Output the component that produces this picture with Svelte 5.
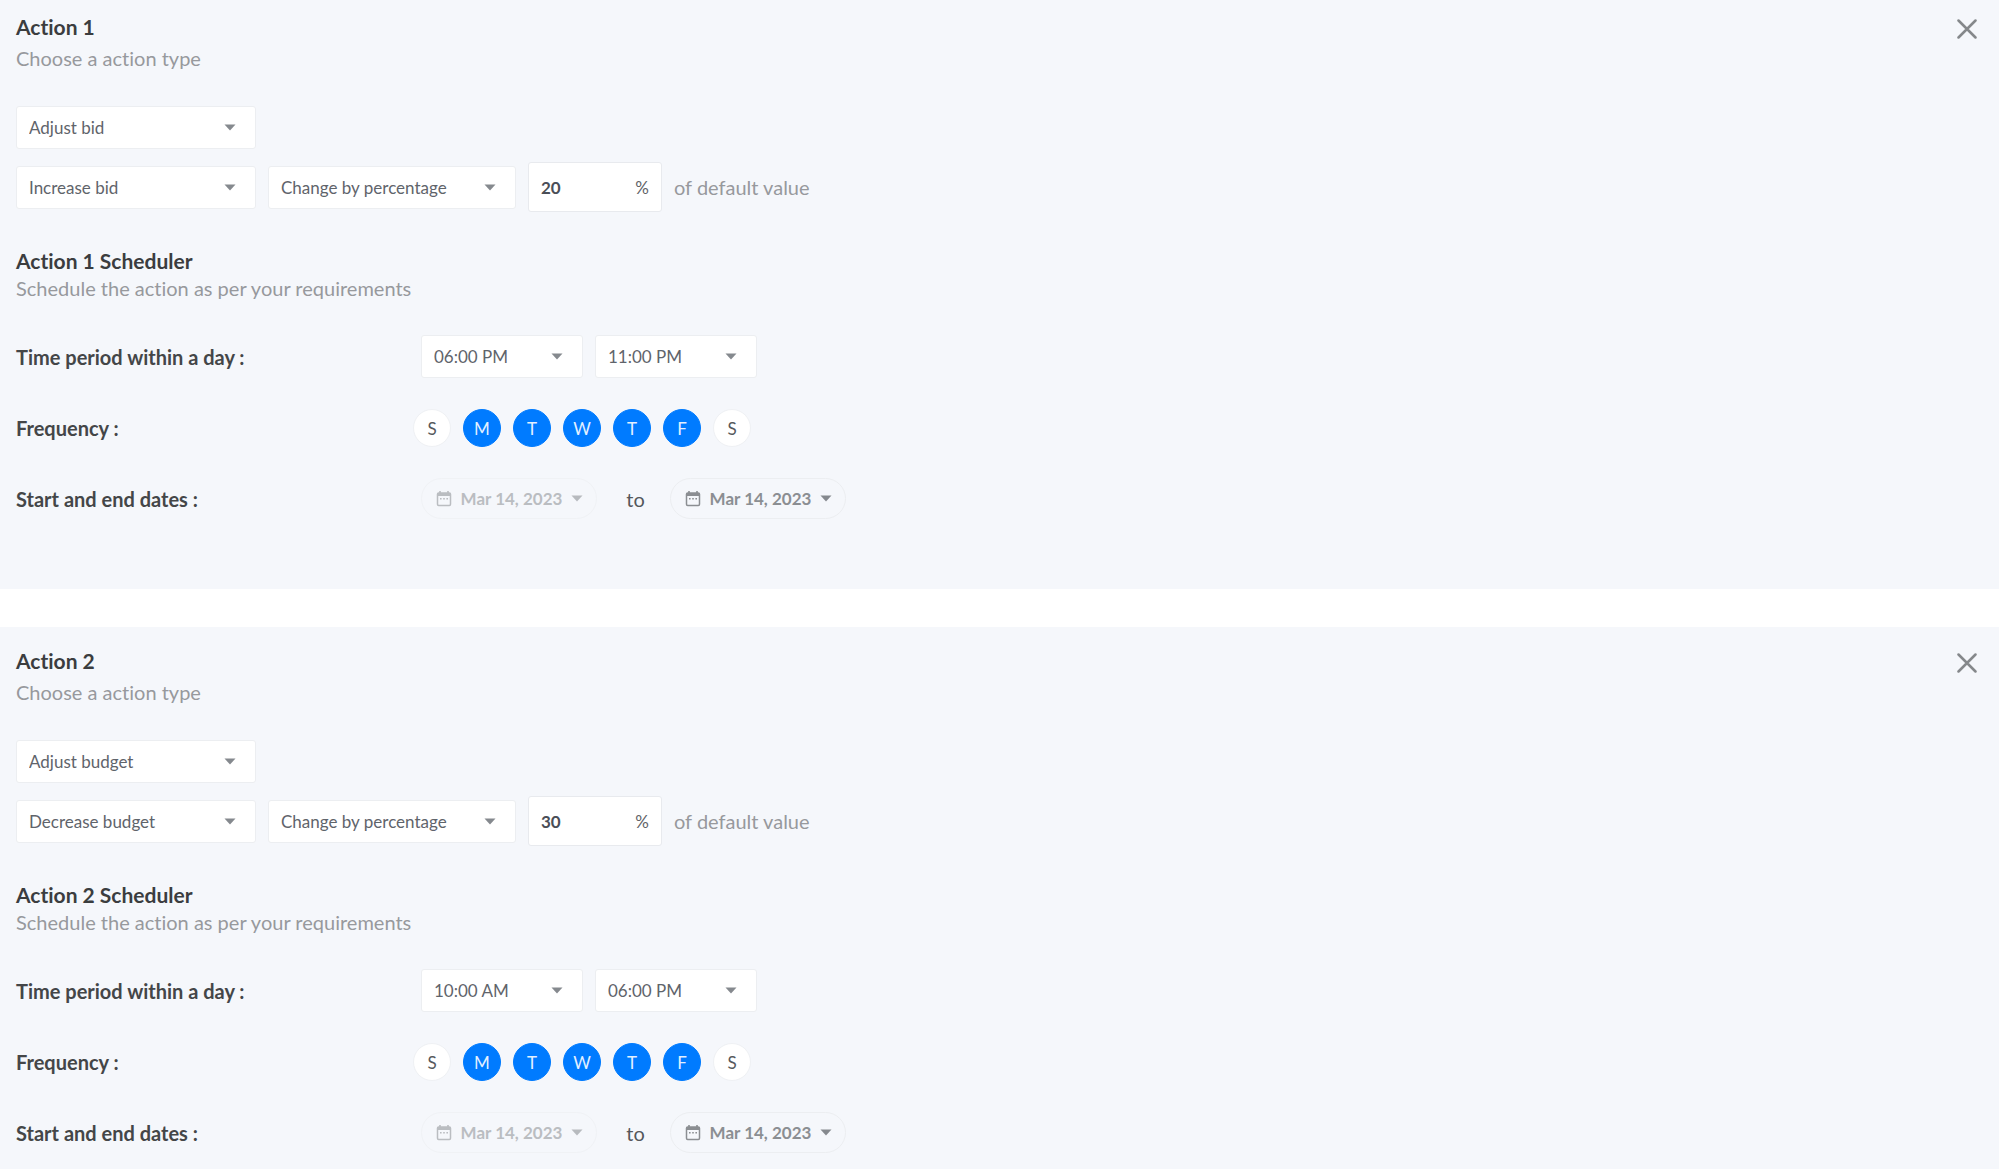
<script>
  const dayLetters = ['S', 'M', 'T', 'W', 'T', 'F', 'S'];
  const dayNames = ['Sunday', 'Monday', 'Tuesday', 'Wednesday', 'Thursday', 'Friday', 'Saturday'];

  let actions = $state([
    {
      id: 1,
      type: 'Adjust bid',
      change: 'Increase bid',
      mode: 'Change by percentage',
      value: '20',
      from: '06:00 PM',
      to: '11:00 PM',
      days: [false, true, true, true, true, true, false],
      start: 'Mar 14, 2023',
      end: 'Mar 14, 2023'
    },
    {
      id: 2,
      type: 'Adjust budget',
      change: 'Decrease budget',
      mode: 'Change by percentage',
      value: '30',
      from: '10:00 AM',
      to: '06:00 PM',
      days: [false, true, true, true, true, true, false],
      start: 'Mar 14, 2023',
      end: 'Mar 14, 2023'
    }
  ]);

  const types = ['Adjust bid', 'Adjust budget'];
  const changes = {
    'Adjust bid': ['Increase bid', 'Decrease bid'],
    'Adjust budget': ['Increase budget', 'Decrease budget']
  };
  const modes = ['Change by percentage', 'Change by amount'];
  const times = ['10:00 AM', '06:00 PM', '11:00 PM'];

  function remove(id) {
    actions = actions.filter((a) => a.id !== id);
  }
</script>

{#snippet caret()}
  <svg class="caret" viewBox="0 0 12 7" aria-hidden="true"><path d="M0.5 0.5h11L6 6.5z" /></svg>
{/snippet}

{#snippet calendar()}
  <svg class="calendar" viewBox="0 0 16 17" aria-hidden="true">
    <rect x="1.5" y="3" width="13" height="12.5" rx="1.2" fill="none" stroke="currentColor" stroke-width="1.5" />
    <path d="M1.5 3h13v3h-13z" fill="currentColor" />
    <path d="M4 1v3M12 1v3" stroke="currentColor" stroke-width="1.6" />
    <path d="M4 8.8h1.6M7.2 8.8h1.6M10.4 8.8h1.6" stroke="currentColor" stroke-width="1.5" />
  </svg>
{/snippet}

<main>
  {#each actions as action (action.id)}
    <section>
      <header>
        <div>
          <h2>Action {action.id}</h2>
          <p>Choose a action type</p>
        </div>
        <button class="close" aria-label="Remove action {action.id}" onclick={() => remove(action.id)}>
          <svg viewBox="0 0 20 20" aria-hidden="true"><path d="M1.5 1.5l17 17M18.5 1.5l-17 17" /></svg>
        </button>
      </header>

      <div class="row type-row">
        <div class="select medium">
          <select aria-label="Action type" bind:value={action.type}>
            {#each types as t}<option>{t}</option>{/each}
          </select>
          {@render caret()}
        </div>
      </div>

      <div class="row">
        <div class="select medium">
          <select aria-label="Change direction" bind:value={action.change}>
            {#each changes[action.type] as c}<option>{c}</option>{/each}
          </select>
          {@render caret()}
        </div>
        <div class="select wide">
          <select aria-label="Change method" bind:value={action.mode}>
            {#each modes as m}<option>{m}</option>{/each}
          </select>
          {@render caret()}
        </div>
        <label class="amount">
          <input type="text" aria-label="Percentage" bind:value={action.value} />
          <span>%</span>
        </label>
        <span class="note">of default value</span>
      </div>

      <div class="scheduler">
        <h2>Action {action.id} Scheduler</h2>
        <p>Schedule the action as per your requirements</p>
      </div>

      <div class="fields">
        <div class="field">
          <label class="name" for="from-{action.id}">Time period within a day :</label>
          <div class="row">
            <div class="select small">
              <select id="from-{action.id}" bind:value={action.from}>
                {#each times as t}<option>{t}</option>{/each}
              </select>
              {@render caret()}
            </div>
            <div class="select small">
              <select aria-label="End time" bind:value={action.to}>
                {#each times as t}<option>{t}</option>{/each}
              </select>
              {@render caret()}
            </div>
          </div>
        </div>

        <div class="field">
          <span class="name" id="freq-{action.id}">Frequency :</span>
          <div class="days" role="group" aria-labelledby="freq-{action.id}">
            {#each dayLetters as letter, i}
              <button
                class="day"
                class:on={action.days[i]}
                aria-label={dayNames[i]}
                aria-pressed={action.days[i]}
                onclick={() => (action.days[i] = !action.days[i])}>{letter}</button>
            {/each}
          </div>
        </div>

        <div class="field">
          <span class="name" id="dates-{action.id}">Start and end dates :</span>
          <div class="dates" role="group" aria-labelledby="dates-{action.id}">
            <button class="date" disabled>{@render calendar()}<span>{action.start}</span>{@render caret()}</button>
            <span class="to">to</span>
            <button class="date">{@render calendar()}<span>{action.end}</span>{@render caret()}</button>
          </div>
        </div>
      </div>
    </section>
  {/each}
</main>

<style>
  :global(body) {
    margin: 0;
    background: #fff;
  }

  main {
    display: flex;
    flex-direction: column;
    gap: 38px;
    font-family: Lato, 'Open Sans', sans-serif;
    font-variant-ligatures: none;
    color: #3c4043;
  }

  button,
  input,
  select {
    font-family: inherit;
    margin: 0;
  }

  section {
    background: #f5f7fb;
    padding: 20px 16px 70px;
  }

  section:first-child {
    padding-top: 13px;
  }

  section:last-child {
    padding-bottom: 16px;
  }

  header {
    display: flex;
    justify-content: space-between;
    align-items: flex-start;
  }

  h2 {
    margin: 0;
    font-size: 21px;
    line-height: 28px;
    font-weight: 700;
    color: #3b3d3f;
  }

  p {
    margin: 0;
    font-size: 20px;
    line-height: 26px;
    color: #97999d;
  }

  header p {
    margin-top: 4px;
  }

  .close {
    display: flex;
    padding: 6px;
    border: 0;
    background: none;
    cursor: pointer;
  }

  .close svg {
    width: 20px;
    height: 20px;
    fill: none;
    stroke: #85888b;
    stroke-width: 2.5;
    stroke-linecap: round;
  }

  .row {
    display: flex;
    align-items: center;
    gap: 12px;
  }

  .type-row {
    margin: 35px 0 13px;
  }

  .select {
    display: grid;
    align-items: center;
  }

  .select select {
    grid-area: 1 / 1;
    width: 100%;
    height: 43px;
    padding: 0 36px 0 12px;
    appearance: none;
    border: 1px solid #eceef1;
    border-radius: 3px;
    background: #fff;
    font-size: 17px;
    color: #5f646b;
  }

  .select .caret {
    grid-area: 1 / 1;
    justify-self: end;
    margin-right: 20px;
    pointer-events: none;
  }

  .caret {
    width: 12px;
    height: 7px;
    fill: #85898e;
  }

  .medium {
    width: 240px;
  }

  .wide {
    width: 248px;
  }

  .small {
    width: 162px;
  }

  .amount {
    box-sizing: border-box;
    display: flex;
    align-items: center;
    width: 134px;
    height: 50px;
    padding: 0 12px;
    border: 1px solid #e8eaee;
    border-radius: 3px;
    background: #fff;
    font-size: 17px;
    color: #5f6368;
  }

  .amount input {
    flex: 1;
    min-width: 0;
    padding: 0;
    border: 0;
    outline: 0;
    background: none;
    font-size: 17px;
    font-weight: 700;
    color: #4a4e57;
  }

  .note {
    font-size: 20px;
    line-height: 26px;
    color: #97999d;
  }

  .scheduler {
    margin: 35px 0 34px;
  }

  .fields {
    display: flex;
    flex-direction: column;
    gap: 31px;
  }

  .field {
    display: flex;
    align-items: center;
  }

  .name {
    width: 405px;
    font-size: 20px;
    line-height: 26px;
    font-weight: 700;
    color: #444648;
  }

  .days {
    display: flex;
    gap: 12px;
    margin-left: -8px;
  }

  .day {
    width: 38px;
    height: 38px;
    padding: 0;
    border: 1px solid #eff1f4;
    border-radius: 50%;
    background: #fff;
    font-size: 17px;
    color: #55585c;
    cursor: pointer;
  }

  .day.on {
    border-color: #007bff;
    background: #007bff;
    color: #e3f0ff;
  }

  .dates {
    display: flex;
    align-items: center;
  }

  .date {
    display: flex;
    align-items: center;
    justify-content: space-between;
    width: 176px;
    height: 41px;
    padding: 0 13px 0 14px;
    border: 1px solid #eceef1;
    border-radius: 21px;
    background: none;
    font-size: 17px;
    font-weight: 700;
    color: #8b8e92;
    cursor: pointer;
  }

  .date:disabled {
    opacity: 0.55;
    cursor: default;
  }

  .calendar {
    width: 16px;
    height: 17px;
  }

  .to {
    box-sizing: border-box;
    width: 73px;
    padding-left: 4px;
    text-align: center;
    font-size: 20px;
    line-height: 26px;
    color: #55585c;
  }
</style>
